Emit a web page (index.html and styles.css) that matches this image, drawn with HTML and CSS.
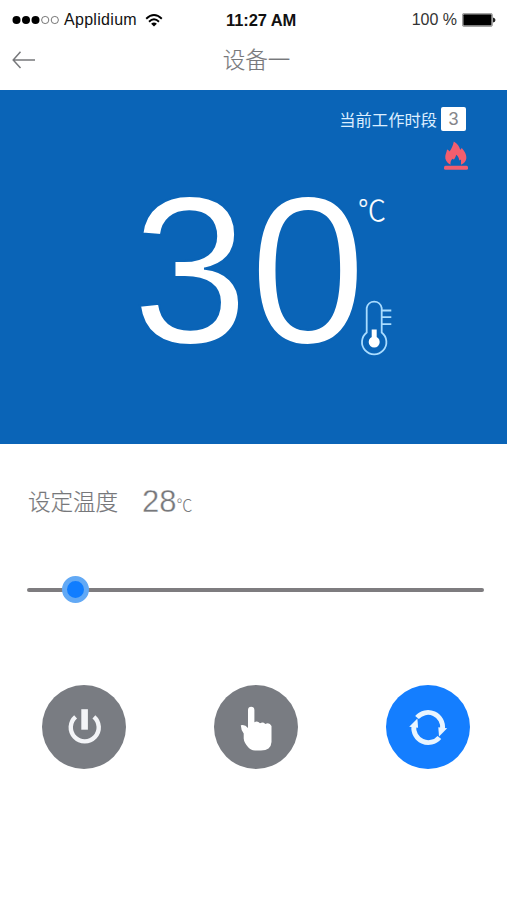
FILE: index.html
```html
<!DOCTYPE html>
<html lang="zh-CN">
<head>
<meta charset="utf-8">
<title>设备一</title>
<link rel="stylesheet" href="styles.css">
</head>
<body>
<div class="status">
  <div class="carrier">
    <svg class="signal" width="48" height="10" viewBox="0 0 48 10"><g fill="#000"><circle cx="4.5" cy="5" r="4"/><circle cx="14" cy="5" r="4"/><circle cx="23.5" cy="5" r="4"/></g><g fill="none" stroke="#555" stroke-width=".8"><circle cx="33.2" cy="5" r="3.6"/><circle cx="42.8" cy="5" r="3.6"/></g></svg>
    <span class="name">Applidium</span>
    <svg class="wifi" width="18" height="13" viewBox="0 0 18 13"><g fill="none" stroke="#000" stroke-width="1.9"><path d="M1.2 4.7Q9-2.5 16.8 4.7"/><path d="M4 7.7Q9 3 14 7.7"/></g><path d="M6.1 9.8Q9 7.3 11.9 9.8L9 12.6Z"/></svg>
  </div>
  <div class="clock">11:27 AM</div>
  <div class="power">
    <span class="percent">100 %</span>
    <svg width="34" height="14" viewBox="0 0 34 14"><rect x=".4" y=".4" width="30" height="13" rx="1.5" fill="#aaa" stroke="#888" stroke-width=".7"/><rect x="1.5" y="1.5" width="27.8" height="10.8" rx=".7"/><path d="M31 4.5Q33.5 5 33.5 7T31 9.5Z" fill="#222"/></svg>
  </div>
</div>
<header class="nav">
  <svg class="back" width="24" height="20" viewBox="0 0 24 20" fill="none" stroke="#77787b" stroke-width="1.5"><path d="M23 10H1.5M8.5 1.8L1.2 10L8.500 18"/></svg>
  <h1>设备一</h1>
</header>
<section class="hero">
  <div class="period"><span>当前工作时段</span><b class="badge">3</b></div>
  <svg class="flame" width="26" height="30" viewBox="0 0 26 30" fill="#f25e6e"><path d="M7.500 23.800C3.500 21.500 1.800 18.500 2.300 15C2.600 12.800 3.800 11 4 8.500C5 8.800 6 9.500 6.500 10.500C8.500 8 10 4.500 10.800 .5C14.500 2.700 16.500 5.500 17.200 8.800C18.200 8.300 18.500 7.800 18.400 6.800C21 9.500 23.800 13.500 23.300 17.500C23 20 21.500 22.200 18 23.800V18.600L16.400 19.400C16 17 14.800 15 13.200 13.800C12.700 16 11.800 17.500 10.800 18.600L9.600 17.800C8 19 7.200 21.500 7.500 23.800Z"/><rect x="1" y="24.800" width="24" height="4" rx="1.500"/></svg>
  <div class="reading">
    <div class="value">30</div>
    <div class="side">
      <span class="unit">℃</span>
      <svg width="34" height="58" viewBox="0 0 34 58" fill="none" stroke="#a9dcff" stroke-width="1.800"><path d="M7.700 33.500V9A7.600 7.600 0 0 1 22.700 9V33.500A12.200 12.200 0 1 1 7.700 33.500Z"/><path d="M22.700 11.500H32.300M22.700 18.200H32.300M22.700 25.200H32.300"/><g fill="#fff" stroke="none"><circle cx="15.200" cy="43" r="5.500"/><path d="M12.700 30.500H17.700V41H12.700Z"/></g></svg>
    </div>
  </div>
</section>
<main>
  <div class="setting"><span class="label">设定温度</span><span class="target">28</span><span class="degree">℃</span></div>
  <div class="slider"><div class="thumb"></div></div>
  <div class="actions">
    <button class="action" aria-label="电源"><svg width="84" height="84" viewBox="0 0 84 84" fill="none" stroke="#f3f4f7"><path d="M33.600 31.800A14 14 0 1 0 51.900 31.800" stroke-width="4.400"/><path d="M42.600 24.200V44.700" stroke-width="6.600"/></svg></button>
    <button class="action" aria-label="手动"><svg width="84" height="84" viewBox="0 0 84 84" fill="#fff"><path d="M34 43V25Q34.200 21.800 37.200 21.800T40.400 25V37.300Q43.500 35.500 46 38.300Q49 36.600 51.300 39Q55.500 37 57.500 41V57Q57.300 61 54.500 63.500Q52 65.400 47 65.400H41Q36.500 65.300 34.200 62.200Q30 57.500 29.700 53.500V48.500Q27 45 26.800 40.200Q31 39 34 43Z"/></svg></button>
    <button class="action active" aria-label="自动"><svg width="84" height="84" viewBox="0 0 84 84" fill="#e9f5ff"><g id="arrow"><path fill="none" stroke="#e9f5ff" stroke-width="4.800" d="M31 32.500A14.600 14.600 0 0 1 56.500 44"/><path d="M52.300 42.300L61.200 43.200L53 51.500Z"/></g><use href="#arrow" transform="rotate(180 42.200 42.500)"/></svg></button>
  </div>
</main>
</body>
</html>
```
FILE: styles.css
```css
* { box-sizing: border-box; }
body {
  margin: 0;
  width: 507px;
  height: 900px;
  overflow: hidden;
  background: #fff;
  font-family: "Liberation Sans", "Noto Sans CJK SC", sans-serif;
  color: #77787b;
}
svg { display: block; flex: none; }
.status {
  height: 40px;
  padding: 0 11px 0 12px;
  display: grid;
  grid-template-columns: 214px auto 1fr;
  align-items: center;
  color: #111;
  font-size: 16px;
  white-space: nowrap;
}
.carrier, .power { display: flex; align-items: center; }
.name { margin-left: 4px; font-size: 16px; letter-spacing: .3px; }
.wifi { margin-left: 8px; }
.clock { font-weight: bold; font-size: 16.5px; letter-spacing: -.1px; }
.power { justify-content: flex-end; gap: 5px; }
.percent { color: #333; }
.nav {
  height: 50px;
  padding: 0 12px;
  display: grid;
  grid-template-columns: 1fr auto 1fr;
  align-items: center;
}
.nav h1 {
  margin: 0 0 14px 6px;
  font: 300 22.500px/32px "Noto Sans CJK SC", sans-serif;
  -webkit-text-stroke: .15px #77787b;
}
.back { margin-bottom: 10px; }
.hero {
  height: 353.500px;
  padding: 17px 41px 0 0;
  background: #0a64b7;
  color: #fff;
  display: flex;
  flex-direction: column;
}
.period {
  height: 24px;
  display: flex;
  justify-content: flex-end;
  align-items: center;
  gap: 4px;
  font: 400 16.300px/24px "Noto Sans CJK SC", sans-serif;
  color: #dceeff;
}
.badge {
  width: 25px;
  height: 24px;
  border-radius: 2px;
  background: #fff;
  color: #85868a;
  font: 400 18px/25px "Liberation Sans", sans-serif;
  text-align: center;
}
.flame { align-self: flex-end; margin: 10px -3px 0 0; }
.reading { display: flex; padding-left: 132px; margin-top: 10px; }
.value {
  width: 226px;
  font-size: 209px;
  line-height: 180px;
  letter-spacing: 1.500px;
  white-space: nowrap;
  -webkit-text-stroke: 2px #0a64b7;
}
.side {
  display: flex;
  flex-direction: column;
  justify-content: space-between;
  height: 166px;
  margin-top: 10px;
}
.unit {
  font: 300 28px/36px "Noto Sans CJK SC", sans-serif;
  -webkit-text-stroke: .2px #fff;
}
.side svg { margin-left: 1px; }
.setting {
  height: 70px;
  margin-top: 23px;
  padding-left: 28px;
  display: flex;
  align-items: center;
}
.label {
  margin-bottom: 3px;
  font: 300 22.500px/32px "Noto Sans CJK SC", sans-serif;
  -webkit-text-stroke: .2px #77787b;
}
.target { margin-left: 24px; font-size: 31px; -webkit-text-stroke: .350px #fff; }
.degree {
  margin-top: 5px;
  font: 300 16px/24px "Noto Sans CJK SC", sans-serif;
}
.slider {
  width: 457px;
  height: 4px;
  margin: 51px 0 0 27px;
  border-radius: 2px;
  background: #7e7c7f;
  display: flex;
  align-items: center;
}
.thumb {
  flex: none;
  width: 27px;
  height: 27px;
  margin-left: 35px;
  border: 5.500px solid #62a9f5;
  border-radius: 50%;
  background: #107dff;
}
.actions {
  display: flex;
  justify-content: space-between;
  margin-top: 93px;
  padding: 0 37.500px 0 41.500px;
}
.action {
  width: 84px;
  height: 84px;
  padding: 0;
  border: 0;
  border-radius: 50%;
  background: #797c82;
}
.action.active { background: #147eff; }
```
